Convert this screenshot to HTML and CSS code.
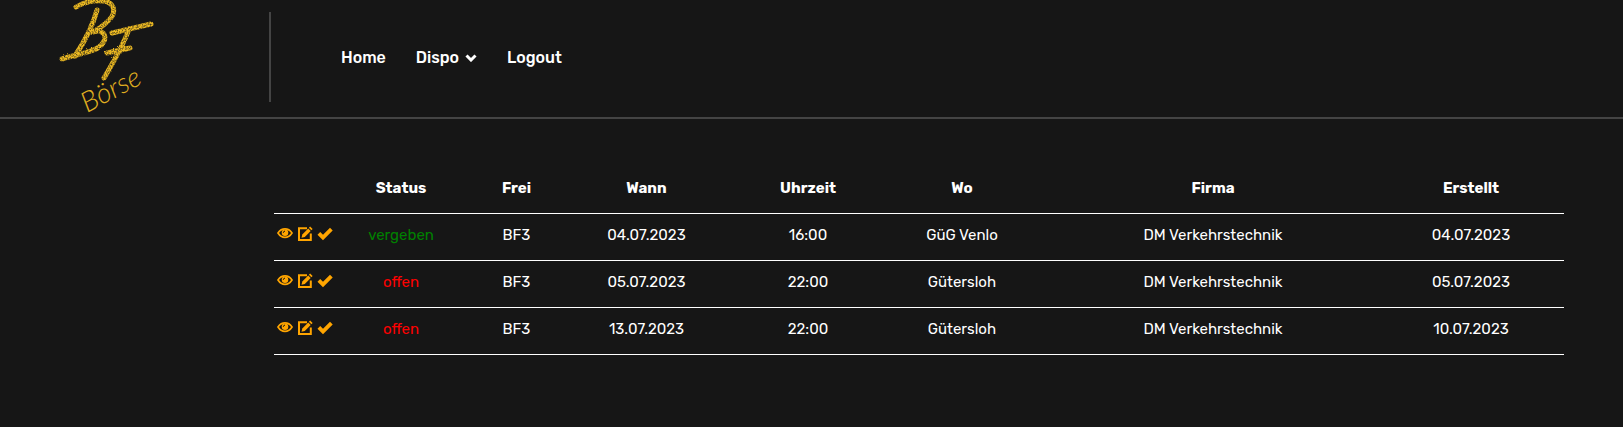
FILE: index.html
```html
<!DOCTYPE html>
<html lang="de">
  <head>
    <meta charset="UTF-8" />
    <meta name="viewport" content="width=device-width, initial-scale=1.0" />
    <title>BF Börse</title>
    <link rel="stylesheet" href="styles.css">
  </head>
  <body>
    <svg class="sprite" aria-hidden="true">
      <symbol id="eye" viewBox="0 0 16 16">
        <path d="M1 7C3 4 5.300 2.900 8 2.900S13 4 15 7C13 10.200 10.700 11.300 8 11.300S3 10.200 1 7Z" fill="none" stroke="currentColor" stroke-width="1.700" />
        <circle cx="8" cy="6.800" r="3.300" fill="currentColor" />
        <path d="M6.300 6.800A1.800 1.800 0 0 1 8 5.100" fill="none" stroke="#161616" stroke-width="1" />
      </symbol>
      <symbol id="edit" viewBox="0 0 16 16">
        <path d="M10 2.200H2V14H13.800V7.500" fill="none" stroke="currentColor" stroke-width="2" />
        <path d="M4.500 11.700L5.300 8.400L11.200 2.500L13.700 5L7.800 10.900Z" fill="currentColor" />
        <path d="M11.900 1.800L13.100 0.600L15.600 3.100L14.400 4.300Z" fill="currentColor" />
      </symbol>
      <symbol id="check" viewBox="0 0 16 16">
        <path d="M0.500 8.700L3.200 6L6 8.800L13 1.800L15.700 4.500L6 14.200Z" fill="currentColor" />
      </symbol>
    </svg>

    <header class="header">
      <a href="#" class="logo" aria-label="BF Börse">
        <svg width="120" height="117" viewBox="0 0 120 117">
          <defs>
            <filter id="chalk" x="-10%" y="-10%" width="120%" height="120%">
              <feTurbulence type="fractalNoise" baseFrequency="0.7" numOctaves="2" seed="4" result="noise" />
              <feDisplacementMap in="SourceGraphic" in2="noise" scale="2" result="rough" />
              <feColorMatrix in="noise" type="matrix" values="0 0 0 0 0  0 0 0 0 0  0 0 0 0 0  0 0 0 2 -0.200" result="grain" />
              <feComposite in="rough" in2="grain" operator="in" />
            </filter>
          </defs>
          <g class="brush" filter="url(#chalk)">
            <path d="M26 7C34 2 44 0 54 1C65 3 67 13 58 21C53 26 47 30 42 32" />
            <path d="M47 10C43 25 35 41 25 56" />
            <path d="M42 32C53 29 58 35 53 43C47 52 31 53 12 59" />
            <path d="M62 33L101 24" />
            <path d="M79 29C73 46 64 61 54 78" />
            <path d="M57 53L80 48" />
          </g>
          <text class="wordmark" x="37" y="113" transform="rotate(-28 37 113)">Börse</text>
        </svg>
      </a>
      <nav class="nav">
        <a href="#">Home</a>
        <button type="button">
          Dispo
          <svg width="12" height="8" viewBox="0 0 12 8"><path d="M1.500 1.500L6 6L10.500 1.500" /></svg>
        </button>
        <a href="#">Logout</a>
      </nav>
    </header>

    <main class="content">
      <table class="jobs">
        <thead>
          <tr>
            <th class="col-actions"></th>
            <th class="col-status">Status</th>
            <th class="col-free">Frei</th>
            <th class="col-date">Wann</th>
            <th class="col-time">Uhrzeit</th>
            <th class="col-place">Wo</th>
            <th>Firma</th>
            <th class="col-created">Erstellt</th>
          </tr>
        </thead>
        <tbody>
          <tr>
            <td>
              <div class="actions">
                <a href="#" aria-label="Ansehen"><svg><use href="#eye" /></svg></a>
                <a href="#" aria-label="Bearbeiten"><svg><use href="#edit" /></svg></a>
                <a href="#" aria-label="Erledigt"><svg><use href="#check" /></svg></a>
              </div>
            </td>
            <td class="taken">vergeben</td>
            <td>BF3</td>
            <td>04.07.2023</td>
            <td>16:00</td>
            <td>GüG Venlo</td>
            <td>DM Verkehrstechnik</td>
            <td class="col-created">04.07.2023</td>
          </tr>
          <tr>
            <td>
              <div class="actions">
                <a href="#" aria-label="Ansehen"><svg><use href="#eye" /></svg></a>
                <a href="#" aria-label="Bearbeiten"><svg><use href="#edit" /></svg></a>
                <a href="#" aria-label="Erledigt"><svg><use href="#check" /></svg></a>
              </div>
            </td>
            <td class="open">offen</td>
            <td>BF3</td>
            <td>05.07.2023</td>
            <td>22:00</td>
            <td>Gütersloh</td>
            <td>DM Verkehrstechnik</td>
            <td class="col-created">05.07.2023</td>
          </tr>
          <tr>
            <td>
              <div class="actions">
                <a href="#" aria-label="Ansehen"><svg><use href="#eye" /></svg></a>
                <a href="#" aria-label="Bearbeiten"><svg><use href="#edit" /></svg></a>
                <a href="#" aria-label="Erledigt"><svg><use href="#check" /></svg></a>
              </div>
            </td>
            <td class="open">offen</td>
            <td>BF3</td>
            <td>13.07.2023</td>
            <td>22:00</td>
            <td>Gütersloh</td>
            <td>DM Verkehrstechnik</td>
            <td class="col-created">10.07.2023</td>
          </tr>
        </tbody>
      </table>
    </main>
  </body>
</html>
```
FILE: styles.css
```css
* {
  box-sizing: border-box;
}
body {
  margin: 0;
  background-color: #161616;
  color: #fff;
  font-family: Rubik, Roboto, sans-serif;
  font-size: 15px;
  line-height: 24px;
}
.sprite {
  display: none;
}
.header {
  display: flex;
  align-items: flex-start;
  border-bottom: 2px solid #444;
}
.logo {
  width: 269px;
  padding-left: 50px;
}
.logo svg {
  display: block;
  overflow: visible;
}
.brush {
  fill: none;
  stroke: #eebb22;
  stroke-width: 5;
  stroke-linecap: round;
  stroke-linejoin: round;
}
.wordmark {
  font-family: Lato, sans-serif;
  font-size: 28px;
  font-style: italic;
  font-weight: 300;
  fill: #e0b020;
}
.nav {
  display: flex;
  align-items: center;
  gap: 30px;
  height: 90px;
  margin-top: 12px;
  padding-top: 2px;
  padding-left: 70px;
  border-left: 2px solid #444;
}
.nav a,
.nav button {
  display: flex;
  align-items: center;
  gap: 6px;
  padding: 0;
  border: none;
  background: none;
  color: #fff;
  font: inherit;
  font-size: 16px;
  font-weight: 500;
  text-decoration: none;
  cursor: pointer;
}
.nav svg {
  fill: none;
  stroke: #fff;
  stroke-width: 3;
}
.content {
  padding: 48px 59px 48px 274px;
}
.jobs {
  width: 100%;
  table-layout: fixed;
  border-spacing: 0;
  text-align: center;
}
.jobs th,
.jobs td {
  padding: 9px 0 13px;
  border-bottom: 1px solid #fff;
}
.jobs th {
  font-weight: 700;
}
.col-actions {
  width: 60px;
}
.col-status {
  width: 134px;
}
.col-free {
  width: 97px;
}
.col-date {
  width: 163px;
}
.col-time {
  width: 160px;
}
.col-place {
  width: 148px;
}
.jobs .col-created {
  width: 174px;
  padding-right: 12px;
}
.actions {
  display: flex;
  align-items: flex-start;
  gap: 4px;
  height: 24px;
  padding-top: 3px;
  padding-left: 3px;
}
.actions a {
  display: block;
  height: 16px;
  color: orange;
}
.actions svg {
  display: block;
  width: 16px;
  height: 16px;
}
.taken {
  color: green;
}
.open {
  color: red;
}
```
